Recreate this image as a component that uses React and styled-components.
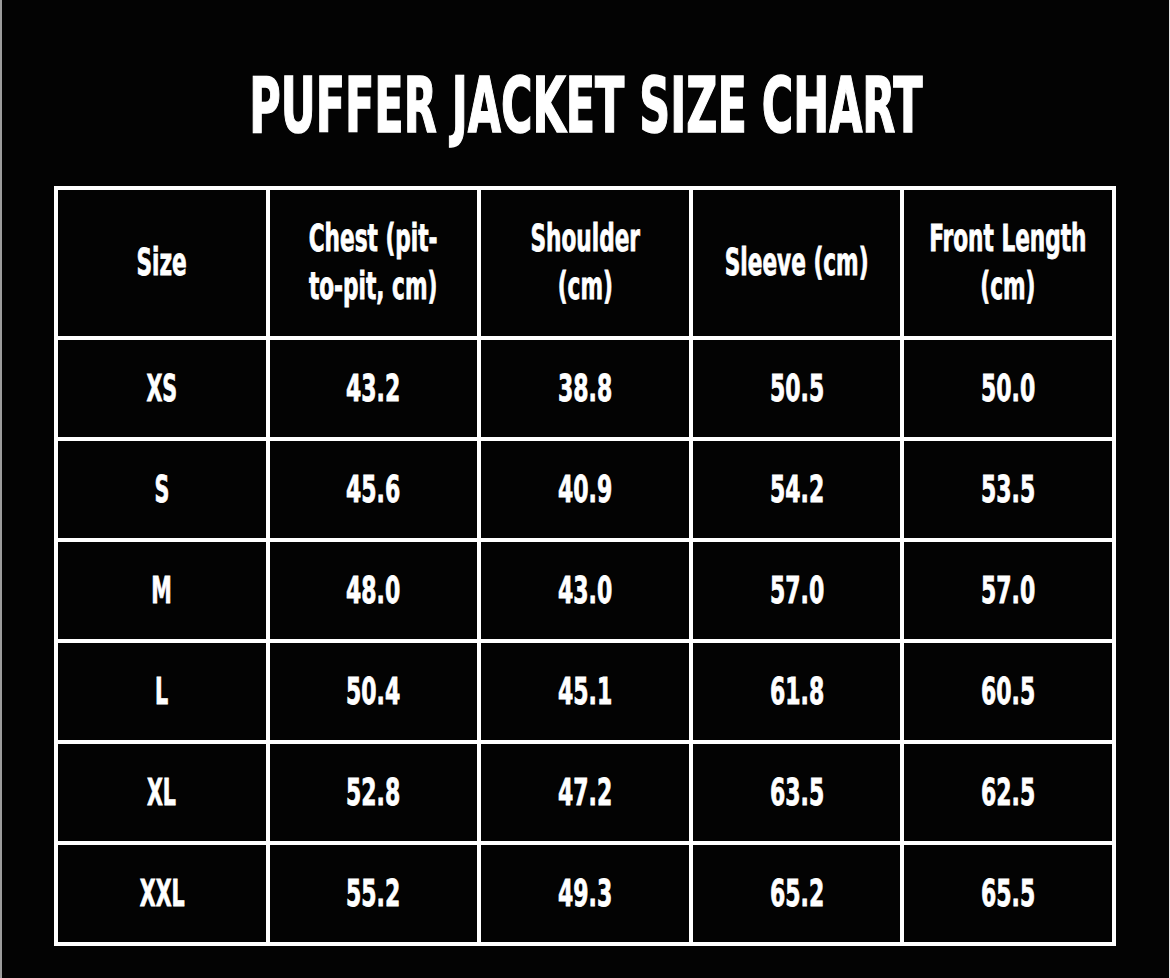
import React from "react";
import styled, { createGlobalStyle } from "styled-components";

const GlobalStyle = createGlobalStyle`
  html, body {
    margin: 0;
    padding: 0;
    background: #030303;
  }
  * { box-sizing: border-box; }
`;

const Page = styled.div`
  width: 1170px;
  height: 978px;
  background: #030303;
  border-left: 2px solid #9c9c9c;
  border-right: 1px solid #e4e4e4;
  padding: 67px 52px 0 52px;
  font-family: "DejaVu Sans Condensed", "DejaVu Sans", sans-serif;
  font-weight: 700;
  color: #ffffff;
`;

const Title = styled.h1`
  margin: 0 0 41px 0;
  height: 78px;
  display: flex;
  justify-content: center;
  font-size: 77px;
  line-height: 78px;
  font-weight: 700;
  white-space: nowrap;
`;

const Squeeze = styled.span`
  display: inline-block;
  flex: none;
  white-space: nowrap;
  transform: scaleX(${(p) => p.$x});
  transform-origin: center;
  -webkit-text-stroke: ${(p) => p.$stroke || "0px"} #ffffff;
`;

const Grid = styled.div`
  width: 1062px;
  display: grid;
  grid-template-columns: repeat(5, 1fr);
  grid-template-rows: 146px repeat(6, 97px);
  gap: 4px;
  padding: 4px;
  background: #ffffff;
`;

const Cell = styled.div`
  background: #030303;
  display: flex;
  align-items: center;
  justify-content: center;
  text-align: center;
  font-size: 37px;
  line-height: 48px;
  min-width: 0;
`;

const headers = [
  ["Size"],
  ["Chest (pit-", "to-pit, cm)"],
  ["Shoulder", "(cm)"],
  ["Sleeve (cm)"],
  ["Front Length", "(cm)"],
];

const rows = [
  ["XS", "43.2", "38.8", "50.5", "50.0"],
  ["S", "45.6", "40.9", "54.2", "53.5"],
  ["M", "48.0", "43.0", "57.0", "57.0"],
  ["L", "50.4", "45.1", "61.8", "60.5"],
  ["XL", "52.8", "47.2", "63.5", "62.5"],
  ["XXL", "55.2", "49.3", "65.2", "65.5"],
];

export default function App() {
  return (
    <>
      <GlobalStyle />
      <Page>
        <Title>
          <Squeeze $x={0.62} $stroke="1.4px">PUFFER JACKET SIZE CHART</Squeeze>
        </Title>
        <Grid>
          {headers.map((lines, i) => (
            <Cell key={"h" + i}>
              <Squeeze $x={0.65} $stroke="0.8px">
                {lines.map((l, j) => (
                  <React.Fragment key={j}>
                    {j > 0 && <br />}
                    {l}
                  </React.Fragment>
                ))}
              </Squeeze>
            </Cell>
          ))}
          {rows.map((r, ri) =>
            r.map((v, ci) => (
              <Cell key={ri + "-" + ci}>
                <Squeeze $x={ci === 0 ? 0.62 : 0.66} $stroke="0.8px">
                  {v}
                </Squeeze>
              </Cell>
            ))
          )}
        </Grid>
      </Page>
    </>
  );
}
